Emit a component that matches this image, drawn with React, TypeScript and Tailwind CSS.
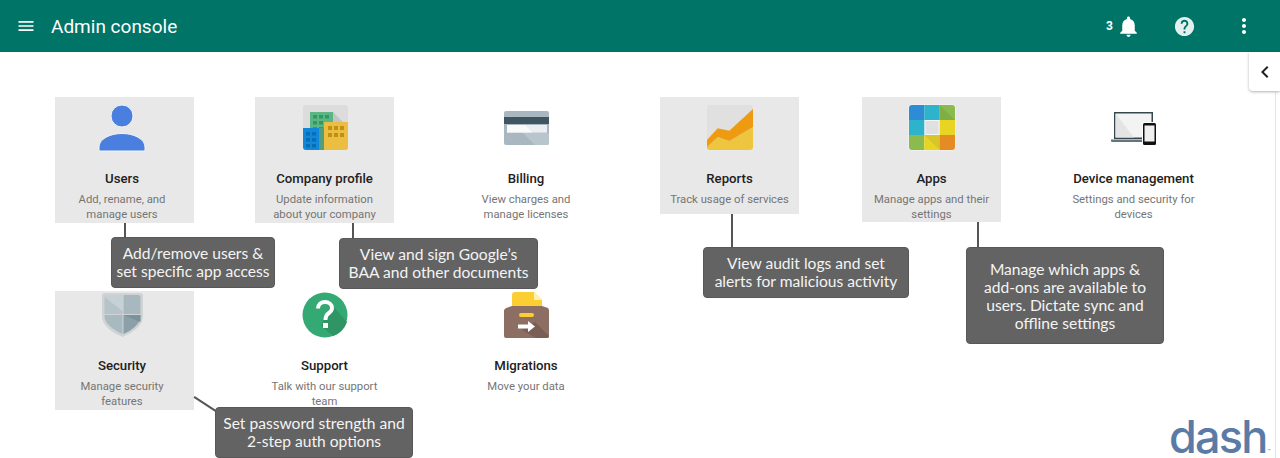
import { type ReactNode } from 'react';
import { MdMenu, MdNotifications, MdHelp, MdMoreVert, MdChevronLeft } from 'react-icons/md';

const UsersIcon = () => (
  <svg width="48" height="48" viewBox="0 0 48 48">
    <circle cx="24" cy="12" r="11" fill="#4a7fdf" stroke="#f4f4f4" strokeWidth="1" />
    <path d="M1 47 V43 C1 35 12 29.500 24 29.500 C36 29.500 47 35 47 43 V47 Z" fill="#4a7fdf" stroke="#f4f4f4" strokeWidth="1" />
  </svg>
);

const CompanyIcon = () => (
  <svg width="48" height="48" viewBox="0 0 48 48">
    <rect x="2" y="1" width="45" height="45" rx="3" fill="#dcdcdc" />
    <path d="M32 8 L47 23 V18 H32 Z" fill="#c4c4c4" />
    <rect x="9" y="8" width="23" height="38" fill="#5cb585" />
    <g fill="#2f9a60">
      <rect x="12" y="11" width="4" height="3.500" />
      <rect x="18" y="11" width="4" height="3.500" />
      <rect x="24" y="11" width="4" height="3.500" />
      <rect x="12" y="17" width="4" height="3.500" />
      <rect x="18" y="17" width="4" height="3.500" />
      <rect x="12" y="23" width="4" height="3.500" />
      <rect x="18" y="23" width="4" height="3.500" />
    </g>
    <path d="M2 24 H18 V46 H5 Q2 46 2 43 Z" fill="#0f87da" />
    <g fill="#0a6cb2">
      <rect x="5" y="28" width="4" height="3.500" />
      <rect x="11" y="28" width="4" height="3.500" />
      <rect x="5" y="34" width="4" height="3.500" />
      <rect x="11" y="34" width="4" height="3.500" />
      <rect x="5" y="40" width="4" height="3.500" />
      <rect x="11" y="40" width="4" height="3.500" />
    </g>
    <path d="M18 24 H23 V46 H18 Z" fill="#4f9e7f" />
    <path d="M23 18 H47 V43 Q47 46 44 46 H23 Z" fill="#ebbd41" />
    <g fill="#c18f16">
      <rect x="27" y="22" width="4" height="4" />
      <rect x="33" y="22" width="4" height="4" />
      <rect x="39" y="22" width="4" height="4" />
      <rect x="27" y="29" width="4" height="4" />
      <rect x="33" y="29" width="4" height="4" />
      <rect x="39" y="29" width="4" height="4" />
    </g>
  </svg>
);

const BillingIcon = () => (
  <svg width="48" height="48" viewBox="0 0 48 48">
    <rect x="2" y="7" width="45" height="34" rx="2" fill="#a9b8c0" />
    <path d="M20 28 H45 L47 30 V39 Q47 41 45 41 H33 Z" fill="#b8c5cc" />
    <rect x="2" y="13" width="45" height="7" fill="#3f5560" />
    <rect x="5" y="21" width="40" height="7.500" fill="#eceff1" />
    <path d="M5 21 H23 L30 28.500 H5 Z" fill="#fafafa" />
  </svg>
);

const ReportsIcon = () => (
  <svg width="48" height="48" viewBox="0 0 48 48">
    <rect x="1" y="1" width="46" height="45" rx="3" fill="#e0e0e0" />
    <path d="M1 43 L11.700 33 L23.300 37 L47 23 V43 Q47 46 44 46 H4 Q1 46 1 43 Z" fill="#edc53f" />
    <path d="M1 36 L11.700 24.300 L23.300 26.700 L47 5 V23 L23.300 37 L11.700 33 L1 43 Z" fill="#ee9b12" />
  </svg>
);

const AppsIcon = () => (
  <svg width="48" height="48" viewBox="0 0 48 48">
    <rect x="0.500" y="0.500" width="47" height="46" rx="3" fill="#f5f5f5" />
    <path d="M1 4 Q1 1 4 1 H16.300 V16 H1 Z" fill="#2e8bd6" />
    <rect x="16.300" y="1" width="15.400" height="15" fill="#2db3cc" />
    <path d="M31.700 1 H44 Q47 1 47 4 V16 H31.700 Z" fill="#8cbb4d" />
    <path d="M31.700 1 L47 16 H31.700 Z" fill="#7fae44" />
    <rect x="1" y="16" width="15.300" height="15" fill="#2db3cc" />
    <rect x="17.500" y="17" width="13" height="13" fill="#e0e0e0" />
    <rect x="31.700" y="16" width="15.300" height="15" fill="#e8d523" />
    <path d="M1 31 H16.300 V46 H4 Q1 46 1 43 Z" fill="#8cbb4d" />
    <rect x="16.300" y="31" width="15.400" height="15" fill="#e8d523" />
    <path d="M16.300 31 L31.700 46 V31 Z" fill="#d8c528" />
    <path d="M31.700 31 H47 V43 Q47 46 44 46 H31.700 Z" fill="#e58b24" />
  </svg>
);

const DeviceIcon = () => (
  <svg width="48" height="48" viewBox="0 0 48 48">
    <rect x="4" y="8" width="39" height="27" fill="#37474f" />
    <rect x="5.500" y="9.500" width="36" height="24" fill="#f3f3f3" />
    <path d="M5.500 9.500 L24 33.500 H5.500 Z" fill="#e4e4e4" />
    <path d="M1 35.500 H43 V38 H2 Q1 38 1 37 Z" fill="#66757c" />
    <rect x="33" y="19" width="13" height="22" rx="1.500" fill="#ffffff" stroke="#ffffff" strokeWidth="2" />
    <rect x="33" y="19" width="13" height="22" rx="1.500" fill="#111111" />
    <rect x="34.500" y="21.500" width="10" height="16" fill="#efefef" />
  </svg>
);

const SecurityIcon = () => (
  <svg width="48" height="48" viewBox="0 -1 48 48">
    <path d="M4 4 Q4 1 7 1 H42 Q45 1 45 4 V24 C45 34 34 41 24.500 45 C15 41 4 34 4 24 Z" fill="#d0d3d4" />
    <path d="M6.500 5 Q6.500 3 9 3 H24.500 V22 H6.500 Z" fill="#c6d1d6" />
    <path d="M6.500 5 L24.500 19 V22 H6.500 Z" fill="#b6c4ca" />
    <path d="M25.500 3 H40 Q42.500 3 42.500 5 V22 H25.500 Z" fill="#a8b8bf" />
    <path d="M6.500 23 H24.500 V42 C16 38 6.500 32 6.500 24 Z" fill="#a9b9c0" />
    <path d="M25.500 23 H42.500 V24 C42.500 32 34 38 25.500 42 Z" fill="#8ba0a9" />
    <path d="M25.500 23 H42.500 V30 Z" fill="#7a929c" />
  </svg>
);

const SupportIcon = () => (
  <svg width="48" height="48" viewBox="0 -1 48 48">
    <circle cx="24" cy="23" r="22.500" fill="#35a974" />
    <path d="M30 12 L46 30 A22.500 22.500 0 0 1 32 44 L20 34 Z" fill="#2f9565" />
    <path d="M17 16.500 C17 12.500 20 10 24 10 C28 10 31 12.500 31 16 C31 20 27 21 25.500 23.500 C24.800 24.700 24.500 26 24.500 28" fill="none" stroke="#ffffff" strokeWidth="4" />
    <rect x="22" y="31" width="5" height="5" fill="#ffffff" />
  </svg>
);

const MigrationsIcon = () => (
  <svg width="48" height="48" viewBox="0 -1 48 48">
    <path d="M10 3 Q10 0 13 0 H32 L40 8 V17 H10 Z" fill="#fbcf33" />
    <path d="M32 0 L40 8 H32 Z" fill="#fdf0b0" />
    <path d="M4 16 L10 14 H40 L46 16 L47 18 V44 Q47 46 45 46 H4 Q2 46 2 44 V18 Z" fill="#8d6e63" />
    <path d="M33 30 L47 44 V44 Q47 46 45 46 H34 L20 38 Z" fill="#7a5d53" />
    <rect x="17" y="21" width="15" height="4" rx="2" fill="#fbcf33" />
    <path d="M16 32.500 H26 V29 L33 34.500 L26 40 V36.500 H16 Z" fill="#ffffff" />
  </svg>
);

type Tile = {
  title: string;
  desc: string;
  icon: ReactNode;
  box: string;
};

const tiles: Tile[] = [
  { title: 'Users', desc: 'Add, rename, and manage users', icon: <UsersIcon />, box: 'h-[126px] pt-[7px] pr-[5px] bg-[#e8e8e8]' },
  { title: 'Company profile', desc: 'Update information about your company', icon: <CompanyIcon />, box: 'h-[126px] pt-[7px] bg-[#e8e8e8]' },
  { title: 'Billing', desc: 'View charges and manage licenses', icon: <BillingIcon />, box: 'h-[126px] pt-[7px]' },
  { title: 'Reports', desc: 'Track usage of services', icon: <ReportsIcon />, box: 'h-[117px] pt-[7px] bg-[#e8e8e8]' },
  { title: 'Apps', desc: 'Manage apps and their settings', icon: <AppsIcon />, box: 'h-[125px] pt-[7px] bg-[#e8e8e8]' },
  { title: 'Device management', desc: 'Settings and security for devices', icon: <DeviceIcon />, box: 'h-[126px] pt-[7px]' },
  { title: 'Security', desc: 'Manage security features', icon: <SecurityIcon />, box: 'h-[119px] pr-[5px] bg-[#e8e8e8]' },
  { title: 'Support', desc: 'Talk with our support team', icon: <SupportIcon />, box: 'h-[119px]' },
  { title: 'Migrations', desc: 'Move your data', icon: <MigrationsIcon />, box: 'h-[119px]' },
];

const notes = [
  { lines: ['Add/remove users &', 'set specific app access'], box: 'left-[111px] top-[237px] w-[164px] h-[51px] pb-[2px]' },
  { lines: ["View and sign Google’s", 'BAA and other documents'], box: 'left-[339px] top-[238px] w-[199px] h-[51px] pb-[2px]' },
  { lines: ['View audit logs and set', 'alerts for malicious activity'], box: 'left-[703px] top-[247px] w-[206px] h-[51px] pb-[2px]' },
  { lines: ['Manage which apps &', 'add-ons are available to', 'users. Dictate sync and', 'offline settings'], box: 'left-[966px] top-[247px] w-[198px] h-[97px]' },
  { lines: ['Set password strength and', '2-step auth options'], box: 'left-[215px] top-[407px] w-[198px] h-[51px] pb-[2px]' },
];

const TileCard = ({ title, desc, icon, box }: Tile) => (
  <div className={`flex w-[139px] flex-col items-center text-center ${box}`}>
    <div className="h-12 w-12 shrink-0">{icon}</div>
    <div className="mt-[18px] text-[13.2px] leading-[18px] font-medium text-[#212121]">{title}</div>
    <div className="mt-[4px] w-[125px] text-[11.3px] leading-[15px] text-[#757575]">{desc}</div>
  </div>
);

const App = () => {
  return (
    <div className="relative h-[458px] w-[1280px] overflow-hidden bg-white font-['Roboto',sans-serif]">
      <header className="flex h-[52px] items-center bg-[#007466] text-white">
        <MdMenu className="ml-[16px]" size={20} />
        <h1 className="ml-[15px] text-[19px] leading-none font-normal">Admin console</h1>
        <div className="ml-auto flex items-center pr-[12px]">
          <span className="mr-[3px] text-[12px] font-bold">3</span>
          <MdNotifications size={25} />
          <span className="ml-[19px] flex w-12 justify-center">
            <MdHelp className="text-[#e4f0ee]" size={23} />
          </span>
          <span className="ml-[12px] flex w-12 justify-center">
            <MdMoreVert size={24} />
          </span>
        </div>
      </header>

      <main className="grid grid-cols-[200px_201.5px_203.5px_202px_202px_139px] grid-rows-[194px_auto] pt-[45px] pl-[55px]">
        {tiles.map((tile) => (
          <TileCard key={tile.title} {...tile} />
        ))}
      </main>

      {/* Annotations on top of the console */}
      <div className="absolute top-[223px] left-[124px] h-[15px] w-[2px] bg-[#555555]" />
      <div className="absolute top-[223px] left-[352px] h-[15px] w-[2px] bg-[#555555]" />
      <div className="absolute top-[214px] left-[731px] h-[33px] w-[2px] bg-[#555555]" />
      <div className="absolute top-[222px] left-[977px] h-[25px] w-[2px] bg-[#555555]" />
      <div className="absolute top-[403px] left-[192px] h-[2px] w-[26px] rotate-[33deg] bg-[#555555]" />

      {notes.map((note) => (
        <div
          key={note.lines[0]}
          className={`absolute flex flex-col items-center justify-center rounded-[4px] border border-[#585858] bg-[#636363] font-['Lato',sans-serif] text-[15.6px] leading-[18px] text-[#f4f4f4] ${note.box}`}>
          {note.lines.map((line) => (
            <span key={line} className="whitespace-nowrap">
              {line}
            </span>
          ))}
        </div>
      ))}

      {/* Collapse tab and panel edge */}
      <div className="absolute top-[92px] right-[4px] bottom-0 w-px bg-[#e6e6e6]" />
      <div className="absolute top-[52px] right-0 flex h-[39px] w-[31px] items-center justify-center rounded-bl-[4px] bg-white shadow-[0_1px_3px_rgba(0,0,0,0.3)]">
        <MdChevronLeft className="text-[#212121]" size={24} />
      </div>

      <div className="absolute top-[419px] left-[1169px] flex items-end font-['Inter',sans-serif] text-[45px] leading-[36px] font-medium tracking-[-1.800px] text-[#5b7ba6]">
        dash
        <span className="mb-[1px] ml-[1px] text-[5px] leading-none tracking-normal">™</span>
      </div>
    </div>
  );
};

export default App;
